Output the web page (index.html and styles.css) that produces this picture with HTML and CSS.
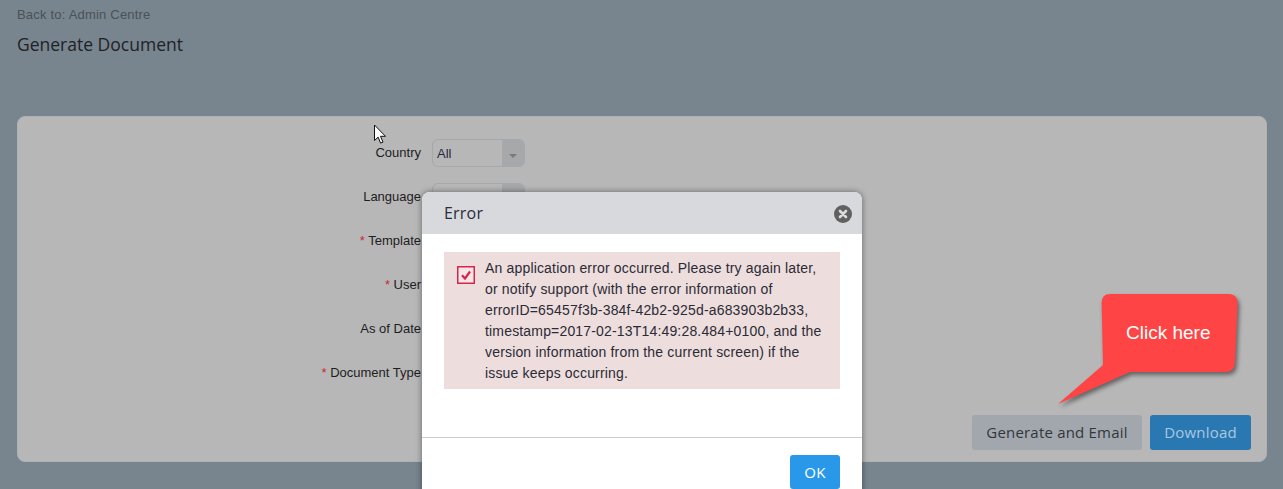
FILE: index.html
```html
<!DOCTYPE html>
<html lang="en">
<head>
<meta charset="utf-8">
<title>Generate Document</title>
<link rel="stylesheet" href="styles.css">
</head>
<body>
<div class="page">
  <a class="back">Back to: Admin Centre</a>
  <h1 class="title">Generate Document</h1>
  <section class="card">
    <form class="form">
      <label class="label">Country</label>
      <div class="select"><span class="select-value">All</span><span class="select-arrow"></span></div>
      <label class="label">Language</label>
      <div class="select"><span class="select-value"></span><span class="select-arrow"></span></div>
      <label class="label"><span class="req">*</span> Template</label>
      <div class="select"><span class="select-value"></span><span class="select-arrow"></span></div>
      <label class="label"><span class="req">*</span> User</label>
      <div class="select"><span class="select-value"></span><span class="select-arrow"></span></div>
      <label class="label">As of Date</label>
      <div class="select"><span class="select-value"></span><span class="select-arrow"></span></div>
      <label class="label"><span class="req">*</span> Document Type</label>
      <div class="select"><span class="select-value"></span><span class="select-arrow"></span></div>
    </form>
    <div class="actions">
      <button class="btn btn-muted" type="button">Generate and Email</button>
      <button class="btn btn-dim" type="button">Download</button>
    </div>
  </section>
</div>

<svg class="cursor" width="14" height="21" viewBox="0 0 14 21">
  <path d="M1.5 1v15.500l3.600-3.400 2.500 6 2.400-1-2.500-5.800h5z" fill="#fff" stroke="#111" stroke-width="1"/>
</svg>

<div class="modal">
  <header class="modal-head">
    <h2 class="modal-title">Error</h2>
    <svg class="close" width="18" height="18" viewBox="0 0 18 18">
      <circle cx="9" cy="9" r="9" fill="#606060"/>
      <path d="M6 6l6 6M12 6l-6 6" stroke="#dcdcdc" stroke-width="2.600" stroke-linecap="round"/>
    </svg>
  </header>
  <div class="modal-body">
    <div class="alert">
      <svg class="alert-icon" width="18" height="18" viewBox="0 0 18 18">
        <rect x=".75" y=".75" width="16.5" height="16.5" fill="#f5e6e8" stroke="#dc2348" stroke-width="1.5"/>
        <path d="M5 9.200l3 3.300 5-7" fill="none" stroke="#dc2348" stroke-width="2.200"/>
      </svg>
      <p class="alert-text">An application error occurred. Please try again later, or notify support (with the error information of errorID=65457f3b-384f-42b2-925d-a683903b2b33, timestamp=2017-02-13T14:49:28.484+0100, and the version information from the current screen) if the issue keeps occurring.</p>
    </div>
  </div>
  <footer class="modal-foot">
    <button class="btn btn-primary" type="button">OK</button>
  </footer>
</div>

<div class="callout">
  <svg class="callout-shape" width="190" height="120" viewBox="0 0 190 120">
    <path d="M62 4H180Q189.600 4 189.600 13L187 73Q186.500 82 177 82H82L10 114L55 75L53.600 13Q53.600 4 62 4Z" fill="#fe4444"/>
  </svg>
  <span class="callout-text">Click here</span>
</div>
</body>
</html>
```
FILE: styles.css
```css
* { box-sizing: border-box; }
html, body { margin: 0; height: 100%; overflow: hidden; }
body {
  background: #78858e;
  font-family: "Liberation Sans", Arial, sans-serif;
  color: #222;
}
.page { padding: 7px 16px 0 17px; }
.back {
  display: block;
  font-size: 13px;
  line-height: 16px;
  letter-spacing: .2px;
  color: #4a5157;
}
.title {
  margin: 11px 0 0;
  font: 400 17.5px/20px "Open Sans", sans-serif;
  color: #1e2226;
}
.card {
  margin-top: 62px;
  height: 346px;
  background: #b7b7b7;
  border: 1px solid #aeb2b3;
  border-radius: 8px;
  padding: 22px 15px 11px 0;
  display: flex;
  flex-direction: column;
  justify-content: space-between;
}
.form {
  display: grid;
  grid-template-columns: 403px 93px;
  column-gap: 11px;
  row-gap: 16px;
  grid-auto-rows: 28px;
}
.label {
  font-size: 13px;
  line-height: 28px;
  text-align: right;
  color: #1d1d22;
}
.req { color: #c8283c; }
.select {
  display: flex;
  border: 1px solid #a3a9ac;
  border-radius: 6px;
  overflow: hidden;
  background: #b7b7b7;
}
.select-value { flex: 1; font-size: 13px; line-height: 27px; padding-left: 4px; color: #1f2a38; }
.select-arrow {
  width: 22px;
  background: #a6a8a9;
  position: relative;
}
.select-arrow::after {
  content: "";
  position: absolute;
  left: 7px;
  top: 14px;
  border: 4px solid transparent;
  border-top: 4px solid #757b7f;
  border-bottom: 0;
}
.actions { display: flex; justify-content: flex-end; gap: 8px; }
.btn {
  height: 35px;
  border: 0;
  border-radius: 3px;
  font: 400 15px/35px "Open Sans", sans-serif;
  letter-spacing: .2px;
  padding: 0;
}
.btn-muted { width: 170px; background: #a1a7ac; color: #33363c; }
.btn-dim { width: 101px; background: #2a78b2; color: #a9c8e0; }
.btn-primary { width: 50px; height: 34px; background: #2998e8; color: #fff; }
.cursor { position: absolute; left: 373px; top: 124px; }
.modal {
  position: absolute;
  left: 422px;
  top: 192px;
  width: 440px;
  background: #fff;
  border-radius: 8px 8px 0 0;
  box-shadow: 0 0 6px rgba(0, 0, 0, .45);
}
.modal-head {
  height: 42px;
  background: #d8d9dd;
  border-radius: 8px 8px 0 0;
  display: flex;
  align-items: center;
  justify-content: space-between;
  padding: 0 10px 0 22px;
}
.modal-title { margin: 0; font: 400 16px/20px "Open Sans", sans-serif; letter-spacing: .2px; color: #2a2d3a; }
.close { margin-top: 2px; }
.modal-body { padding: 18px 22px 48px; border-bottom: 1px solid #ccc; }
.alert {
  display: flex;
  align-items: flex-start;
  background: #eddddd;
  padding: 6px 16px 5px 13px;
}
.alert-icon { flex: none; margin: 8px 10px 0 0; width: 18px; height: 18px; }
.alert-text { margin: 0; font-size: 14px; line-height: 21px; letter-spacing: .17px; color: #2b2b35; }
.modal-foot { display: flex; justify-content: flex-end; padding: 17px 22px 40px; }
.callout { position: absolute; left: 1048px; top: 290px; width: 190px; height: 120px; }
.callout-shape { display: block; filter: drop-shadow(2px 3px 2px rgba(0, 0, 0, .45)); }
.callout-text {
  position: absolute;
  left: 78px;
  top: 32px;
  font-size: 19px;
  line-height: 22px;
  color: #fff;
}
```
